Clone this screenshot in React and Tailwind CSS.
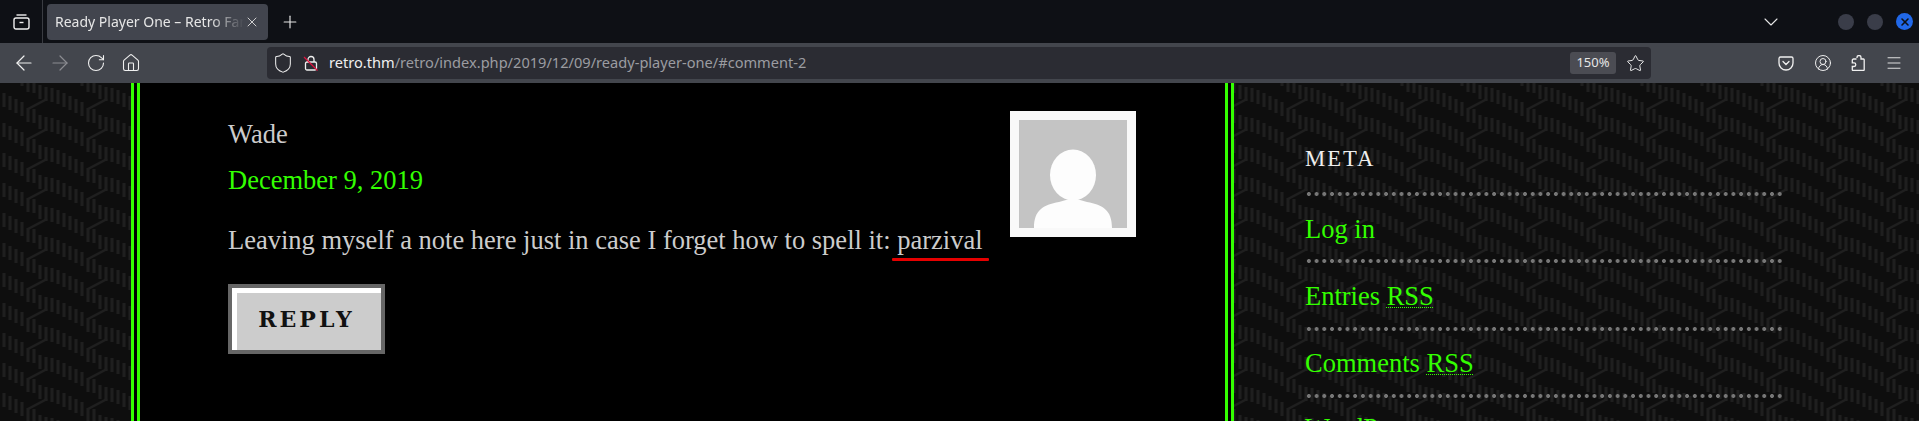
import React from "react";
import {
  ArrowLeft,
  ArrowRight,
  ChevronDown,
  CircleUserRound,
  House,
  Menu,
  Plus,
  RotateCw,
  Shield,
  Star,
  X,
} from "lucide-react";

const dashes = [
  [4, 10], [10, 13], [16, 16], [22, 19], [28, 25], [34, 26], [40, 2], [46, 4], [52, 5], [58, 7],
];

const PagePattern = () => (
  <svg className="absolute inset-0 h-full w-full" aria-hidden="true">
    <defs>
      <pattern id="weave" width="60" height="30" patternUnits="userSpaceOnUse">
        <rect width="60" height="30" fill="#0e0e0e" />
        <g stroke="#1f1f1f" strokeWidth="3" fill="none">
          {dashes.map(([x, y]) => (
            <g key={x}>
              <line x1={x} y1={y} x2={x} y2={y + 14} />
              <line x1={x} y1={y - 30} x2={x} y2={y - 16} />
            </g>
          ))}
          <path d="M28 26 L47 16" strokeWidth="2.5" />
        </g>
      </pattern>
    </defs>
    <rect width="100%" height="100%" fill="url(#weave)" />
  </svg>
);

const TabBar = () => (
  <div className="flex h-[43px] items-center bg-[#0e1015] text-[#e6e6e6]">
    <div className="flex h-full w-[43px] shrink-0 items-center justify-center border-r border-[#3a3c42]">
      <svg width="17" height="16" viewBox="0 0 17 16" fill="none" stroke="#f0f0f0" strokeWidth="1.4">
        <path d="M3.5 1h10" />
        <rect x="1" y="4" width="15" height="11" rx="2" />
        <path d="M6.5 8.5h4" />
      </svg>
    </div>
    <div className="ml-[4px] flex h-[36px] w-[221px] items-center rounded-[4px] bg-[#42454e] pl-[8px] pr-[8px]">
      <span className="flex-1 overflow-hidden whitespace-nowrap text-[14px] [mask-image:linear-gradient(to_right,black_82%,transparent)]">
        Ready Player One – Retro Fan
      </span>
      <X size={16} strokeWidth={1.3} />
    </div>
    <Plus size={20} strokeWidth={1.4} className="ml-[12px]" />
    <ChevronDown size={24} strokeWidth={1.1} className="ml-auto mr-[55px]" />
    <div className="mr-[6px] flex items-center gap-[13px]">
      <div className="h-[16px] w-[16px] rounded-full bg-[#3a3d49]" />
      <div className="h-[16px] w-[16px] rounded-full bg-[#3a3d49]" />
      <div className="flex h-[17px] w-[17px] items-center justify-center rounded-full bg-[#2168e8]">
        <X size={12} strokeWidth={3.2} className="text-[#0e1015]" />
      </div>
    </div>
  </div>
);

const NavBar = () => (
  <div className="flex h-[40px] items-center bg-[#43464d] text-[#f0f0f0]">
    <div className="flex w-[267px] shrink-0 items-center pl-[12px]">
      <ArrowLeft size={24} strokeWidth={1.2} />
      <ArrowRight size={24} strokeWidth={1.2} className="ml-[12px] text-[#8b8c91]" />
      <RotateCw size={20} strokeWidth={1.3} className="ml-[14px]" />
      <House size={20} strokeWidth={1.3} className="ml-[15px]" />
    </div>
    <div className="flex h-[32px] w-[1384px] items-center rounded-[4px] bg-[#2b2c33] pl-[5px] pr-[6px]">
      <Shield size={22} strokeWidth={1.1} />
      <svg width="16" height="16" viewBox="0 0 16 16" fill="none" className="ml-[9px]">
        <rect x="2.5" y="7" width="11" height="8" rx="1.5" stroke="#f0f0f0" strokeWidth="1.3" />
        <path d="M5 7V4.5a3 3 0 0 1 6 0V7" stroke="#f0f0f0" strokeWidth="1.3" />
        <path d="M1 2 L14.5 15.5" stroke="#e0123f" strokeWidth="1.2" />
      </svg>
      <span className="ml-[10px] whitespace-nowrap text-[14.6px] text-[#f0f0f0]">
        retro.thm<span className="text-[#9b9ca1]">/retro/index.php/2019/12/09/ready-player-one/#comment-2</span>
      </span>
      <span className="ml-auto flex h-[22px] w-[46px] items-center justify-center rounded-[3px] bg-[#4b4c53] text-[13px] text-[#e6e6e6]">
        150%
      </span>
      <Star size={19} strokeWidth={1.2} className="ml-[10px]" />
    </div>
    <div className="flex flex-1 items-center pl-[127px]">
      <svg width="16" height="16" viewBox="0 0 16 16" fill="none" stroke="#f0f0f0" strokeWidth="1.3">
        <path d="M2.5 2h11A1.5 1.5 0 0 1 15 3.5V8A7 7 0 0 1 1 8V3.5A1.5 1.5 0 0 1 2.5 2Z" />
        <path d="M5 6.5 8 9.5 11 6.5" strokeLinecap="round" />
      </svg>
      <CircleUserRound size={18} strokeWidth={1.3} className="ml-[20px]" />
      <svg width="16" height="16" viewBox="0 0 16 16" fill="none" stroke="#f0f0f0" strokeWidth="1.3" className="ml-[18px]">
        <path d="M7 3V2.5a2 2 0 0 1 4 0V4h2.5a.7.7 0 0 1 .7.7v10a.7.7 0 0 1-.7.7H3a.7.7 0 0 1-.7-.7V11.5H4a1.8 1.8 0 0 0 0-3.6H2.3V5.2A1.2 1.2 0 0 1 3.5 4H6.5" />
      </svg>
      <Menu size={18} strokeWidth={1.2} className="ml-[19px]" />
    </div>
  </div>
);

const Avatar = () => (
  <div className="h-[126px] w-[126px] shrink-0 bg-[#f9f9f9] p-[9px]">
    <svg width="108" height="108" viewBox="0 0 108 108" className="block">
      <rect width="108" height="108" fill="#c4c4c4" />
      <ellipse cx="54" cy="55" rx="23" ry="25.5" fill="#fdfdfd" />
      <path d="M15 108C15 90 24 85 40 82L54 78L68 82C84 85 93 90 93 108Z" fill="#fdfdfd" />
    </svg>
  </div>
);

const Comment = () => (
  <div className="flex justify-between pl-[88px] pr-[89px] pt-[28px] text-[26.5px] leading-[46px] text-[#cccccc]">
    <div>
      <div>Wade</div>
      <div className="text-[#33ff00]">December 9, 2019</div>
      <p className="relative mt-[14px] whitespace-nowrap">
        Leaving myself a note here just in case I forget how to spell it: parzival
        <span className="absolute bottom-[2px] right-[-6px] h-[3px] w-[97px] rounded-[1px] bg-[#e60000]" />
      </p>
      <button className="mt-[21px] block h-[70px] w-[157px] border-[4px] border-[#666666] bg-[#cccccc] font-['DejaVu_Serif',serif] text-[22px] font-bold leading-none tracking-[3px] text-[#111111] shadow-[inset_5px_5px_0_#ffffff]">
        REPLY
      </button>
    </div>
    <Avatar />
  </div>
);

const Divider = () => (
  <div className="h-[4px] w-[480px] bg-[radial-gradient(circle,#777777_1.8px,transparent_2.2px)] bg-[length:7.72px_4px]" />
);

const MetaLink = ({ children }) => (
  <>
    <div className="flex h-[63.3px] items-center pt-[4px] text-[26.5px] text-[#33ff00]">
      <span>{children}</span>
    </div>
    <Divider />
  </>
);

const Rss = () => (
  <abbr className="underline decoration-dotted decoration-1 underline-offset-[2px]">RSS</abbr>
);

const Sidebar = () => (
  <aside className="w-[480px] pt-[63px]">
    <h2 className="mb-[20px] text-[22.7px] font-normal leading-[26px] tracking-[2px] text-[#eeeeee]">
      META
    </h2>
    <Divider />
    <MetaLink>Log in</MetaLink>
    <MetaLink>
      Entries <Rss />
    </MetaLink>
    <MetaLink>
      Comments <Rss />
    </MetaLink>
    <div className="flex h-[61px] items-center text-[26.5px] text-[#33ff00]">WordPress.org</div>
  </aside>
);

const App = () => (
  <div className="flex h-[421px] flex-col overflow-hidden font-['Noto_Sans',sans-serif]">
    <TabBar />
    <NavBar />
    <div className="relative flex-1 overflow-hidden font-['Liberation_Serif',serif]">
      <PagePattern />
      <div className="relative flex h-full pl-[131px]">
        <main className="h-full w-[1103px] shrink-0 border-x-[9px] border-double border-[#33ff00] bg-black">
          <Comment />
        </main>
        <div className="pl-[71px]">
          <Sidebar />
        </div>
      </div>
    </div>
  </div>
);

export default App;
